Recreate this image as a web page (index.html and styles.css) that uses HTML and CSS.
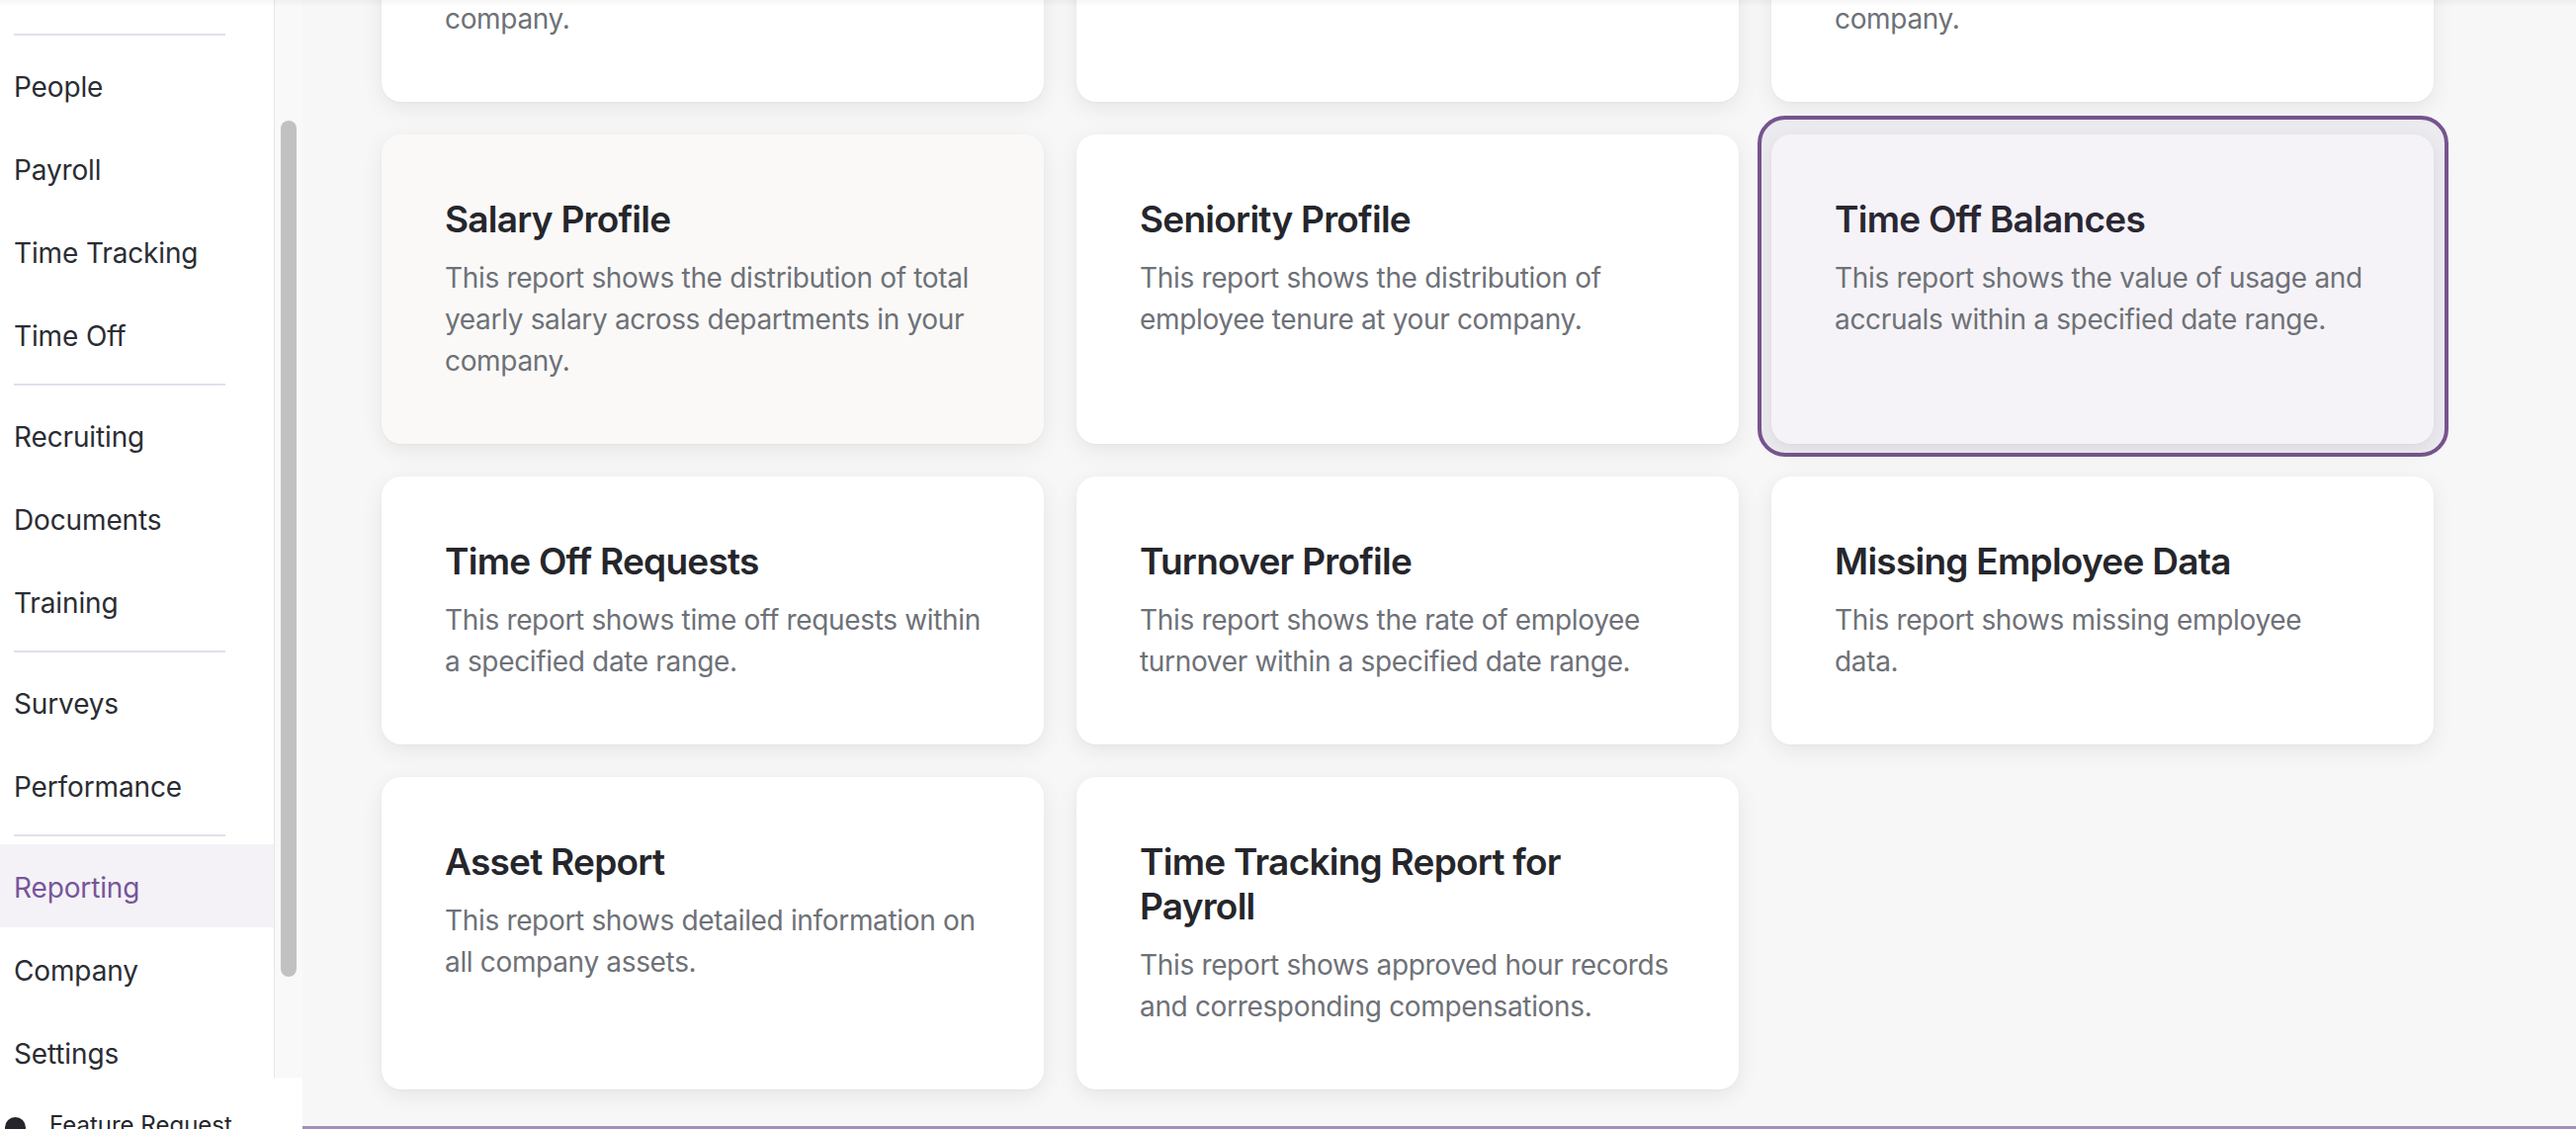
FILE: index.html
```html
<!DOCTYPE html>
<html lang="en">
<head>
<meta charset="utf-8">
<title>Reporting</title>
<link rel="stylesheet" href="styles.css">
</head>
<body>
<div class="top-shade"></div>
<aside class="left">
  <div class="left-top">
    <nav class="nav">
      <div class="divider"></div>
      <a class="nav-item">People</a>
      <a class="nav-item">Payroll</a>
      <a class="nav-item">Time Tracking</a>
      <a class="nav-item">Time Off</a>
      <div class="divider"></div>
      <a class="nav-item">Recruiting</a>
      <a class="nav-item">Documents</a>
      <a class="nav-item">Training</a>
      <div class="divider"></div>
      <a class="nav-item">Surveys</a>
      <a class="nav-item">Performance</a>
      <div class="divider"></div>
      <a class="nav-item active">Reporting</a>
      <a class="nav-item">Company</a>
      <a class="nav-item">Settings</a>
    </nav>
    <div class="track"><div class="thumb"></div></div>
  </div>
  <div class="footer">
    <span class="footer-dot"></span>
    <span class="footer-text">Feature Request</span>
  </div>
</aside>
<main class="main">
  <div class="content">
    <div class="grid">
      <div class="card">
        <h3 class="card-title">Headcount Profile</h3>
        <p class="card-desc">This report shows the distribution of employees across departments in your company.</p>
      </div>
      <div class="card">
        <h3 class="card-title">Age Profile</h3>
        <p class="card-desc">This report shows the distribution of employee age at your company.</p>
      </div>
      <div class="card">
        <h3 class="card-title">Gender Profile</h3>
        <p class="card-desc">This report shows the distribution of gender across departments in your company.</p>
      </div>

      <div class="card hovered">
        <h3 class="card-title">Salary Profile</h3>
        <p class="card-desc">This report shows the distribution of total yearly salary across departments in your company.</p>
      </div>
      <div class="card">
        <h3 class="card-title">Seniority Profile</h3>
        <p class="card-desc">This report shows the distribution of employee tenure at your company.</p>
      </div>
      <div class="card selected">
        <h3 class="card-title">Time Off Balances</h3>
        <p class="card-desc">This report shows the value of usage and accruals within a specified date range.</p>
      </div>

      <div class="card">
        <h3 class="card-title">Time Off Requests</h3>
        <p class="card-desc">This report shows time off requests within a specified date range.</p>
      </div>
      <div class="card">
        <h3 class="card-title">Turnover Profile</h3>
        <p class="card-desc">This report shows the rate of employee turnover within a specified date range.</p>
      </div>
      <div class="card">
        <h3 class="card-title">Missing Employee Data</h3>
        <p class="card-desc">This report shows missing employee<br>data.</p>
      </div>

      <div class="card">
        <h3 class="card-title">Asset Report</h3>
        <p class="card-desc">This report shows detailed information on all company assets.</p>
      </div>
      <div class="card">
        <h3 class="card-title">Time Tracking Report for Payroll</h3>
        <p class="card-desc">This report shows approved hour records and corresponding compensations.</p>
      </div>
    </div>
  </div>
  <div class="bottom-bar"></div>
</main>
</body>
</html>
```
FILE: styles.css
```css
html, body {
  margin: 0;
  padding: 0;
}

body {
  width: 2606px;
  height: 1142px;
  display: flex;
  overflow: hidden;
  font-family: Inter, "Noto Sans", "Liberation Sans", sans-serif;
  color: #2a2d33;
  background: #f7f7f7;
}

.top-shade {
  position: fixed;
  top: 0;
  left: 0;
  right: 0;
  height: 7px;
  background: linear-gradient(to bottom, rgba(0, 0, 0, 0.035), rgba(0, 0, 0, 0));
  pointer-events: none;
  z-index: 10;
}

/* ---------- left column ---------- */
.left {
  width: 306px;
  flex: none;
  display: flex;
  flex-direction: column;
  height: 1142px;
}

.left-top {
  flex: 1;
  min-height: 0;
  display: flex;
  overflow: hidden;
}

.nav {
  width: 277px;
  flex: none;
  background: #ffffff;
  border-right: 1px solid #e6e6e6;
  padding-top: 26px;
  display: flex;
  flex-direction: column;
}

.divider {
  flex: none;
  height: 2px;
  width: 214px;
  margin: 8px 0 8px 14px;
  background: #e3dfea;
}

.nav-item {
  flex: none;
  height: 84px;
  box-sizing: border-box;
  padding-top: 3px;
  display: flex;
  align-items: center;
  padding-left: 14px;
  font-size: 28px;
  letter-spacing: -0.005em;
  line-height: 36px;
  color: #2a2d33;
  white-space: nowrap;
}

.nav-item.active {
  background: #f4f2f6;
  color: #77559a;
}

.track {
  width: 28px;
  flex: none;
  background: #f9f9f9;
}

.thumb {
  width: 16px;
  height: 866px;
  margin: 122px 0 0 6px;
  background: #c1c1c1;
  border-radius: 8px;
}

.footer {
  height: 52px;
  flex: none;
  background: #ffffff;
  overflow: hidden;
  display: flex;
  align-items: flex-start;
  padding-top: 33px;
  box-sizing: border-box;
}

.footer-dot {
  width: 21px;
  height: 21px;
  border-radius: 50%;
  background: #25262b;
  margin: 7px 0 0 5px;
  flex: none;
}

.footer-text {
  margin-left: 24px;
  font-size: 24px;
  line-height: 30px;
  color: #25262b;
  white-space: nowrap;
}

/* ---------- main ---------- */
.main {
  flex: 1;
  min-width: 0;
  display: flex;
  flex-direction: column;
  background: #f7f7f7;
  height: 1142px;
}

.content {
  flex: 1;
  min-height: 0;
  overflow: hidden;
  padding-left: 80px;
}

.grid {
  position: relative;
  z-index: 0;
  margin-top: -210px;
  display: grid;
  grid-template-columns: repeat(3, 670px);
  gap: 33px;
}

.card {
  background: #ffffff;
  border-radius: 20px;
  padding: 63px 62px 63px 64px;
  box-shadow: 0 6px 22px rgba(0, 0, 0, 0.075), 0 1px 3px rgba(0, 0, 0, 0.03);
}

.card.hovered {
  background: #faf9f8;
}

.card.selected {
  position: relative;
  background: #f5f3f7;
}

.card.selected::before {
  content: "";
  position: absolute;
  top: -19px;
  bottom: -13px;
  left: -14px;
  right: -15px;
  border: 4px solid #77548f;
  border-radius: 28px;
  background: #ecebef;
  z-index: -1;
}

.card-title {
  margin: 0 0 16px 0;
  font-size: 37px;
  line-height: 45px;
  font-weight: 600;
  letter-spacing: -0.02em;
  color: #25262b;
}

.card.selected .card-title {
  color: #2a2733;
}

.card-desc {
  margin: 0;
  font-size: 28px;
  line-height: 42px;
  font-weight: 400;
  letter-spacing: -0.012em;
  color: #6e7177;
}

.bottom-bar {
  flex: none;
  height: 3px;
  background: #a38ebd;
}
```
